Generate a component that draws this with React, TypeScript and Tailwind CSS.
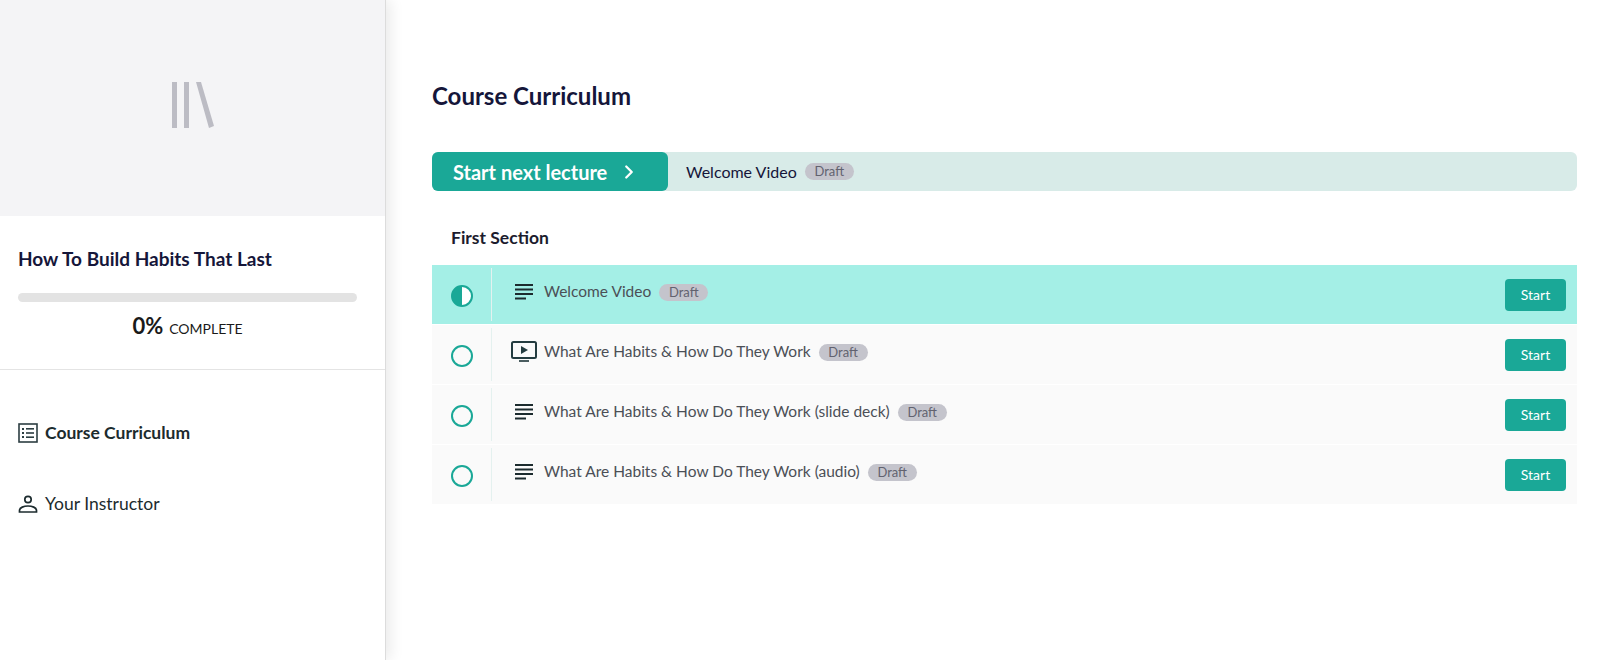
import { ChevronRight } from "lucide-react";

const lectures = [
  { title: "Welcome Video", icon: "text", active: true },
  { title: "What Are Habits & How Do They Work", icon: "video", active: false },
  { title: "What Are Habits & How Do They Work (slide deck)", icon: "text", active: false },
  { title: "What Are Habits & How Do They Work (audio)", icon: "text", active: false },
];

const DraftBadge = () => (
  <span className="ml-[8px] flex h-[17px] w-[49px] items-center justify-center rounded-full bg-[#c4c4cc] text-[13px] leading-none text-[#62626f]">
    Draft
  </span>
);

const TextIcon = () => (
  <svg width="20" height="18" viewBox="0 0 20 18" fill="#1c2b2e">
    <rect x="1" y="1" width="18" height="2" />
    <rect x="1" y="5.5" width="18" height="2" />
    <rect x="1" y="10" width="18" height="2" />
    <rect x="1" y="14.5" width="11" height="2" />
  </svg>
);

const VideoIcon = () => (
  <svg width="26" height="22" viewBox="0 0 26 22" fill="none">
    <rect x="1" y="1" width="24" height="16" rx="1.5" stroke="#243c40" strokeWidth="2" />
    <path d="M10 5 L17 9 L10 13 Z" fill="#243c40" />
    <rect x="8" y="19" width="10" height="2" fill="#4a5d60" />
  </svg>
);

const LectureRow = ({ title, icon, active }: { title: string; icon: string; active: boolean }) => (
  <div className={`flex h-[59px] items-center ${active ? "bg-[#a4efe6]" : "bg-[#fafafa]"}`}>
    <div className="flex h-[53px] w-[60px] items-center justify-center border-r border-[#e4f1ef]">
      <svg width="24" height="24" viewBox="0 0 24 24" fill="none" className="ml-[1px] mt-[2px]">
        <circle cx="12" cy="12" r="10" stroke="#1aa897" strokeWidth="2" fill={active ? "#ffffff" : "none"} />
        {active && <path d="M12 2 A10 10 0 0 0 12 22 Z" fill="#1aa897" />}
      </svg>
    </div>
    <div className="flex w-[52px] justify-center pb-[6px] pl-[11px]">
      {icon === "video" ? <VideoIcon /> : <TextIcon />}
    </div>
    <div className="flex flex-1 items-center pb-[5px] text-[15.5px] text-[#4b4f56]">
      <span>{title}</span>
      <DraftBadge />
    </div>
    <button className="mr-[11px] h-[32px] w-[61px] rounded-[4px] bg-[#1aa897] text-[14px] text-white">
      Start
    </button>
  </div>
);

export default function App() {
  return (
    <div className="flex h-[660px] w-[1600px] overflow-hidden bg-white font-['Lato',sans-serif]">
      {/* Sidebar */}
      <aside className="w-[386px] shrink-0 border-r border-[#dcdcdc] shadow-[4px_0_14px_rgba(0,0,0,0.09)]">
        <div className="flex h-[216px] items-center justify-center bg-[#f4f4f6]">
          <svg width="42" height="46" viewBox="0 0 42 46" className="mb-[6px]">
            <rect x="0" y="0" width="5" height="46" fill="#bcbcc4" />
            <rect x="12" y="0" width="5" height="46" fill="#bcbcc4" />
            <path d="M24 0 L29 0 L42 44 L37 46 Z" fill="#bcbcc4" />
          </svg>
        </div>
        <div className="border-b border-[#e4e4e4] px-[18px] pb-[27px] pt-[30px]">
          <h2 className="text-[19px] font-bold leading-[26px] text-[#15163a]">How To Build Habits That Last</h2>
          <div className="mt-[21px] h-[9px] w-[339px] rounded-full bg-[#e3e3e3]" />
          <div className="mt-[11px] flex w-[339px] items-baseline justify-center gap-[6px] leading-[26px] text-[#1a1a1a]">
            <span className="text-[22px] font-bold">0%</span>
            <span className="text-[14px]">COMPLETE</span>
          </div>
        </div>
        <nav className="px-[18px] pt-[48px]">
          <div className="flex h-[30px] items-center gap-[7px] text-[17.5px] font-bold text-[#1c2b2e]">
            <svg width="20" height="20" viewBox="0 0 20 20" fill="none">
              <rect x="1" y="1" width="18" height="18" stroke="#2c3e42" strokeWidth="1.6" />
              <rect x="4" y="5" width="2" height="2" fill="#2c3e42" />
              <rect x="8" y="5" width="8" height="1.6" fill="#2c3e42" />
              <rect x="4" y="9" width="2" height="2" fill="#2c3e42" />
              <rect x="8" y="9.2" width="8" height="1.6" fill="#2c3e42" />
              <rect x="4" y="13" width="2" height="2" fill="#2c3e42" />
              <rect x="8" y="13.4" width="8" height="1.6" fill="#2c3e42" />
            </svg>
            Course Curriculum
          </div>
          <div className="mt-[41px] flex h-[30px] items-center gap-[7px] text-[17.5px] text-[#1c2b2e]">
            <svg width="20" height="20" viewBox="0 0 20 20" fill="none" stroke="#1c2b2e" strokeWidth="1.7">
              <circle cx="10" cy="5.5" r="3.2" />
              <path d="M1.5 18 L18.5 18 L18.5 16.5 C18.5 13.5 14 12 10 12 C6 12 1.5 13.5 1.5 16.5 Z" />
            </svg>
            Your Instructor
          </div>
        </nav>
      </aside>

      {/* Main */}
      <main className="flex-1 pl-[46px] pr-[23px] pt-[80px]">
        <h1 className="text-[24px] font-bold leading-[32px] text-[#15163a]">Course Curriculum</h1>
        <div className="mt-[40px] flex h-[39px] items-center rounded-[6px] bg-[#d8ebe8]">
          <button className="flex h-[39px] w-[236px] items-center rounded-[6px] bg-[#1aa897] pl-[21px] text-[20px] font-bold text-white">
            Start next lecture
            <ChevronRight className="ml-[11px] h-[22px] w-[22px]" strokeWidth={2.5} />
          </button>
          <span className="ml-[18px] text-[16px] text-[#15163a]">Welcome Video</span>
          <DraftBadge />
        </div>
        <div className="ml-[19px] mt-[35px] text-[17.5px] font-bold leading-[24px] text-[#1c1c2e]">First Section</div>
        <div className="mt-[15px] flex flex-col gap-[1px]">
          {lectures.map((l) => (
            <LectureRow key={l.title} title={l.title} icon={l.icon} active={l.active} />
          ))}
        </div>
      </main>
    </div>
  );
}
